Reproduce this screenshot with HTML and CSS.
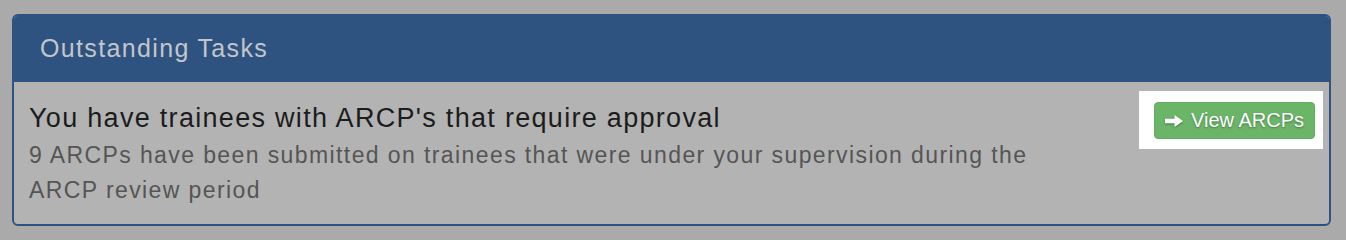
FILE: index.html
```html
<!DOCTYPE html>
<html>
<head>
<meta charset="utf-8">
<link rel="stylesheet" href="styles.css">
</head>
<body>
<div class="panel">
  <div class="panel-heading">Outstanding Tasks</div>
  <div class="panel-body">
    <div class="task-text">
      <div class="task-title">You have trainees with ARCP's that require approval</div>
      <div class="task-desc">9 ARCPs have been submitted on trainees that were under your supervision during the ARCP review period</div>
    </div>
    <div class="highlight">
      <a class="btn-success" href="#"><svg class="arrow" viewBox="0 0 18 12" width="18" height="12"><path d="M0 3.8 H9.5 V0 L18 6 L9.5 12 V8.2 H0 Z" fill="#fff"/></svg>View ARCPs</a>
    </div>
  </div>
</div>
</body>
</html>
```

FILE: styles.css
```css
html, body {
  margin: 0;
  padding: 0;
}
body {
  background: #aaaaaa;
  font-family: "Liberation Sans", Arial, sans-serif;
  width: 1346px;
  height: 238px;
  overflow: hidden;
}
.panel {
  margin: 14px 15px 0 12px;
  border: 2px solid #2e5380;
  border-radius: 6px;
  background: #b3b3b3;
  overflow: hidden;
}
.panel-heading {
  background: #2e5380;
  color: #c2c6cb;
  font-size: 25px;
  letter-spacing: 1.35px;
  height: 66px;
  line-height: 64px;
  padding-left: 26px;
}
.panel-body {
  display: flex;
  align-items: flex-start;
  justify-content: space-between;
  padding: 21px 6px 16px 15px;
}
.task-text {
  width: 1050px;
}
.task-title {
  font-size: 27px;
  letter-spacing: 1.3px;
  line-height: 30px;
  color: #1c1c1c;
  margin-bottom: 5px;
}
.task-desc {
  font-size: 23px;
  letter-spacing: 1.4px;
  line-height: 35px;
  color: #555555;
}
.highlight {
  background: #ffffff;
  margin-top: -12px;
  padding: 11px 8px 10px 15px;
}
.btn-success {
  display: flex;
  align-items: center;
  justify-content: center;
  gap: 8px;
  box-sizing: border-box;
  width: 161px;
  height: 37px;
  background: #6bb568;
  border: 1px solid #62ab5f;
  border-radius: 4px;
  color: #ffffff;
  font-size: 20px;
  text-decoration: none;
  text-shadow: 0 1px 2px rgba(0, 0, 0, 0.35);
}
.arrow {
  filter: drop-shadow(0 1px 1px rgba(0, 0, 0, 0.35));
}
```
